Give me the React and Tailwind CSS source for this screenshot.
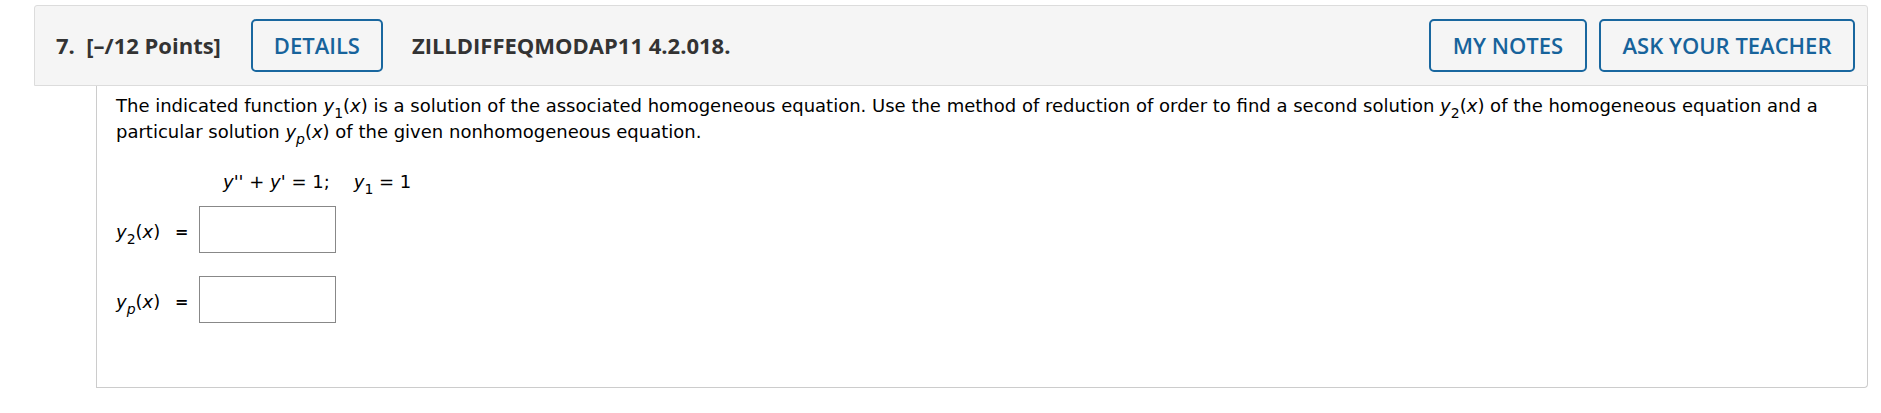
import React from "react";

const body = { fontFamily: '"DejaVu Sans", Verdana, sans-serif' };
const head = { fontFamily: '"Open Sans", "Noto Sans", sans-serif' };

function Btn({ children, w }) {
  return (
    <button
      className={`h-[53px] border-2 border-[#19679f] rounded-[5px] text-[#17639b] text-[22px] font-semibold flex items-center justify-center ${w}`}
      style={head}
    >
      {children}
    </button>
  );
}

function Sub({ children }) {
  return <sub className="text-[14px] bottom-[-0.4em]">{children}</sub>;
}

function Label({ sub }) {
  return (
    <span className="text-[18px] text-black w-[59px] inline-block whitespace-nowrap translate-y-[2px]" style={body}>
      <i>y</i>
      <Sub>{sub}</Sub>(<i>x</i>)
    </span>
  );
}

function Row({ sub, mt }) {
  return (
    <div className={`${mt} flex items-center`}>
      <Label sub={sub} />
      <span className="text-[16px] font-bold text-black translate-y-[2px]">=</span>
      <div className="ml-[11px] w-[137px] h-[47px] border border-[#888] bg-white" />
    </div>
  );
}

export default function App() {
  return (
    <div className="w-[1881px] h-[413px] bg-white pt-[5px]">
      <div
        className="ml-[34px] w-[1834px] h-[81px] bg-[#f5f5f5] border border-[#dcdcdc] rounded-t-[3px] flex items-center pl-[21px] pr-[12px]"
        style={head}
      >
        <span className="text-[22px] font-bold text-[#333] whitespace-pre">7.  [–/12 Points]</span>
        <div className="ml-[30px]">
          <Btn w="w-[132px]">DETAILS</Btn>
        </div>
        <span className="ml-[29px] text-[22px] font-bold text-[#333]">ZILLDIFFEQMODAP11 4.2.018.</span>
        <div className="ml-auto flex gap-[12px]">
          <Btn w="w-[158px]">MY NOTES</Btn>
          <Btn w="w-[256px]">ASK YOUR TEACHER</Btn>
        </div>
      </div>
      <div className="ml-[96px] w-[1772px] h-[302px] border-x border-b border-[#cccccc] rounded-br-[4px] px-[19px] pt-[7px]" style={body}>
        <p className="text-[18px] leading-[26px] text-black">
          The indicated function <i>y</i>
          <Sub>1</Sub>(<i>x</i>) is a solution of the associated homogeneous equation. Use the method of reduction of order to find a second solution <i>y</i>
          <Sub>2</Sub>(<i>x</i>) of the homogeneous equation and a particular solution <i>y</i>
          <Sub><i>p</i></Sub>(<i>x</i>) of the given nonhomogeneous equation.
        </p>
        <p className="mt-[24px] ml-[107px] text-[18px] leading-[26px] text-black whitespace-pre">
          <i>y''</i> + <i>y'</i> = 1;
          <span className="ml-[24px]">
            <i>y</i>
            <Sub>1</Sub> = 1
          </span>
        </p>
        <Row sub="2" mt="mt-[11px]" />
        <Row sub={<i>p</i>} mt="mt-[23px]" />
      </div>
    </div>
  );
}
